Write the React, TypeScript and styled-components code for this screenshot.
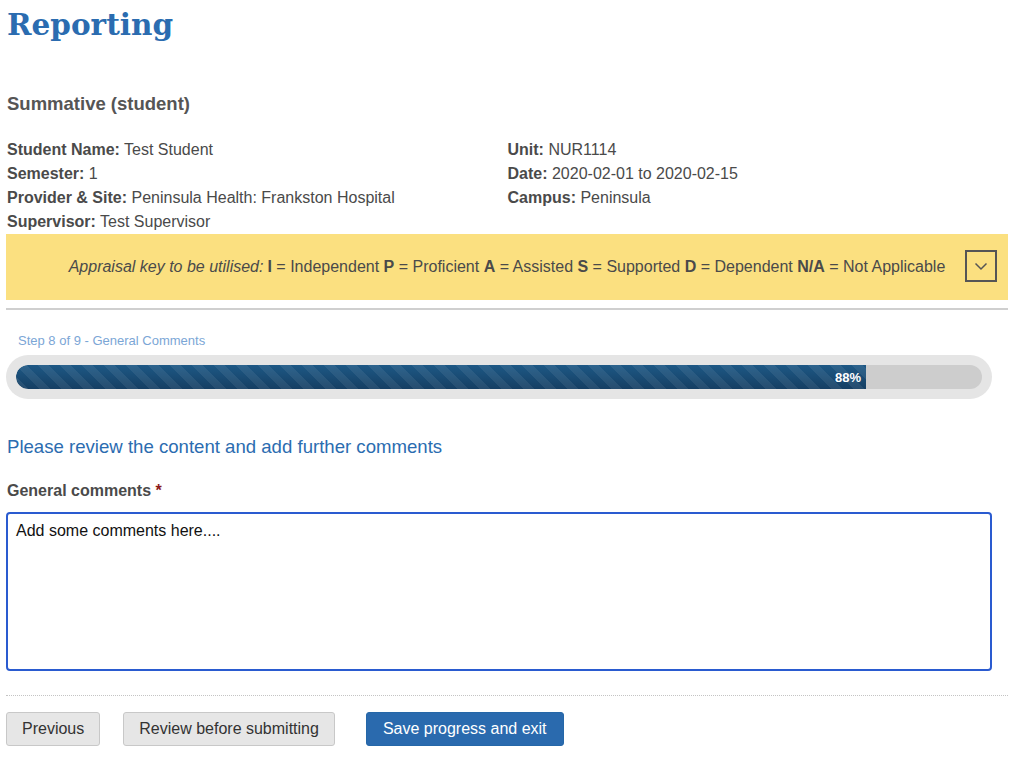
import React from "react";
import styled, { createGlobalStyle } from "styled-components";

const GlobalStyle = createGlobalStyle`
  body {
    margin: 0;
    background: #ffffff;
    font-family: "Liberation Sans", Arial, sans-serif;
    color: #4a4a4a;
  }
`;

const Page = styled.div`
  width: 1002px;
  padding: 0 6px;
`;

const Title = styled.h1`
  margin: 5px 0 0;
  font-family: "DejaVu Serif", Georgia, serif;
  font-size: 29.5px;
  line-height: 40px;
  font-weight: bold;
  color: #2b6cb0;
  padding-left: 1px;
`;

const SubTitle = styled.h2`
  margin: 47px 0 0;
  font-size: 18.5px;
  line-height: 24px;
  font-weight: bold;
  color: #555555;
  padding-left: 1px;
`;

const InfoGrid = styled.div`
  display: grid;
  grid-template-columns: 1fr 1fr;
  margin-top: 22px;
  padding-left: 1px;
`;

const InfoColumn = styled.div`
  display: flex;
  flex-direction: column;
`;

const InfoRow = styled.div`
  font-size: 16px;
  line-height: 24px;
  color: #4a4a4a;
`;

const KeyBand = styled.div`
  position: relative;
  display: flex;
  align-items: center;
  justify-content: center;
  height: 66px;
  background: #fbe080;
  font-size: 16px;
  color: #4a4a4a;
  i {
    margin-right: 4px;
  }
`;

const KeyToggle = styled.button`
  position: absolute;
  right: 11px;
  top: 16px;
  width: 32px;
  height: 32px;
  padding: 0;
  border: 2px solid #555555;
  background: transparent;
  display: flex;
  align-items: center;
  justify-content: center;
  cursor: pointer;
`;

const Rule = styled.hr`
  margin: 8px 0 0;
  border: 0;
  border-top: 2px solid #cfcfcf;
`;

const StepText = styled.div`
  margin-top: 23px;
  padding-left: 12px;
  font-size: 13px;
  line-height: 16px;
  color: #7ba6d6;
`;

const ProgressOuter = styled.div`
  margin-top: 6px;
  width: 986px;
  height: 44px;
  box-sizing: border-box;
  padding: 10px;
  border-radius: 22px;
  background: #e5e5e5;
`;

const ProgressTrack = styled.div`
  height: 24px;
  border-radius: 12px;
  background: #cdcdcd;
  overflow: hidden;
  display: flex;
`;

const ProgressFill = styled.div`
  height: 100%;
  display: flex;
  align-items: center;
  justify-content: flex-end;
  box-sizing: border-box;
  padding-right: 5px;
  border-radius: 12px 0 0 12px;
  background-color: #1a4d78;
  background-image: linear-gradient(
      45deg,
      rgba(255, 255, 255, 0.07) 25%,
      transparent 25%,
      transparent 50%,
      rgba(255, 255, 255, 0.07) 50%,
      rgba(255, 255, 255, 0.07) 75%,
      transparent 75%,
      transparent
    ),
    linear-gradient(to bottom, #1d5885, #163f63);
  background-size: 22px 22px, 100% 100%;
  color: #ffffff;
  font-size: 13px;
  font-weight: bold;
`;

const SectionHeading = styled.h3`
  margin: 36px 0 0;
  padding-left: 1px;
  font-size: 18.6px;
  line-height: 24px;
  font-weight: normal;
  color: #2b6cb0;
`;

const FieldLabel = styled.label`
  display: block;
  margin-top: 22px;
  padding-left: 1px;
  font-size: 16px;
  line-height: 20px;
  font-weight: bold;
  color: #4a4a4a;
`;

const Required = styled.span`
  color: #8b1a1a;
`;

const CommentBox = styled.textarea`
  display: block;
  margin-top: 11px;
  width: 986px;
  height: 159px;
  box-sizing: border-box;
  padding: 7px 8px;
  border: 2px solid #2a5bd0;
  border-radius: 4px;
  font-family: "Liberation Sans", Arial, sans-serif;
  font-size: 16px;
  line-height: 20px;
  color: #111111;
  resize: none;
  outline: none;
`;

const DottedRule = styled.hr`
  margin: 24px 0 0;
  border: 0;
  border-top: 1px dotted #c4c4c4;
`;

const ButtonRow = styled.div`
  display: flex;
  margin-top: 16px;
`;

const Button = styled.button<{ $primary?: boolean; $gap: number }>`
  height: 34px;
  margin-left: ${(p) => p.$gap}px;
  padding: 0 ${(p) => (p.$primary ? 16 : 15)}px;
  border-radius: 3px;
  border: 1px solid ${(p) => (p.$primary ? "#2567a8" : "#c8c8c8")};
  background: ${(p) => (p.$primary ? "#2a6aae" : "#e6e6e6")};
  color: ${(p) => (p.$primary ? "#ffffff" : "#333333")};
  font-family: "Liberation Sans", Arial, sans-serif;
  font-size: 16px;
  cursor: pointer;
`;

const info = {
  left: [
    ["Student Name:", "Test Student"],
    ["Semester:", "1"],
    ["Provider & Site:", "Peninsula Health: Frankston Hospital"],
    ["Supervisor:", "Test Supervisor"],
  ],
  right: [
    ["Unit:", "NUR1114"],
    ["Date:", "2020-02-01 to 2020-02-15"],
    ["Campus:", "Peninsula"],
  ],
};

const appraisal = [
  ["I", "Independent"],
  ["P", "Proficient"],
  ["A", "Assisted"],
  ["S", "Supported"],
  ["D", "Dependent"],
  ["N/A", "Not Applicable"],
];

const App = () => {
  const percent = 88;
  return (
    <Page>
      <GlobalStyle />
      <Title>Reporting</Title>
      <SubTitle>Summative (student)</SubTitle>
      <InfoGrid>
        <InfoColumn>
          {info.left.map(([k, v]) => (
            <InfoRow key={k}>
              <b>{k}</b> {v}
            </InfoRow>
          ))}
        </InfoColumn>
        <InfoColumn>
          {info.right.map(([k, v]) => (
            <InfoRow key={k}>
              <b>{k}</b> {v}
            </InfoRow>
          ))}
        </InfoColumn>
      </InfoGrid>
      <KeyBand>
        <span>
          <i>Appraisal key to be utilised:</i>
          {appraisal.map(([k, v], i) => (
            <React.Fragment key={k}>
              {i > 0 && " "}
              <b>{k}</b> = {v}
            </React.Fragment>
          ))}
        </span>
        <KeyToggle aria-label="Toggle appraisal key">
          <svg width="18" height="18" viewBox="0 0 18 18">
            <path d="M3.5 6.5 L9 12 L14.5 6.5" fill="none" stroke="#555" strokeWidth="1.5" />
          </svg>
        </KeyToggle>
      </KeyBand>
      <Rule />
      <StepText>Step 8 of 9 - General Comments</StepText>
      <ProgressOuter>
        <ProgressTrack>
          <ProgressFill style={{ width: `${percent}%` }}>{percent}%</ProgressFill>
        </ProgressTrack>
      </ProgressOuter>
      <SectionHeading>Please review the content and add further comments</SectionHeading>
      <FieldLabel htmlFor="comments">
        General comments <Required>*</Required>
      </FieldLabel>
      <CommentBox id="comments" defaultValue="Add some comments here...." autoFocus />
      <DottedRule />
      <ButtonRow>
        <Button $gap={0}>Previous</Button>
        <Button $gap={23}>Review before submitting</Button>
        <Button $gap={31} $primary>
          Save progress and exit
        </Button>
      </ButtonRow>
    </Page>
  );
};

export default App;
